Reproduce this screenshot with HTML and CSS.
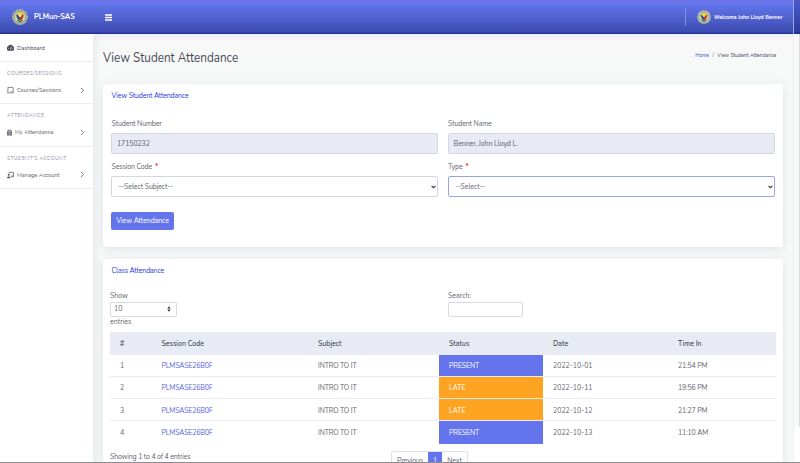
FILE: index.html
```html
<!DOCTYPE html>
<html lang="en">
<head>
<meta charset="utf-8">
<title>PLMun-SAS</title>
<link rel="stylesheet" href="styles.css">
</head>
<body>
<svg class="defs" width="0" height="0">
  <symbol id="seal" viewBox="0 0 30 30">
    <circle cx="15" cy="15" r="14.5" fill="#dfe3d8"/>
    <circle cx="15" cy="15" r="13" fill="none" stroke="#667962" stroke-width="2" stroke-dasharray="2 1"/>
    <circle cx="15" cy="15" r="10.8" fill="#ddd7a0" stroke="#45674d"/>
    <path d="M8 10l7 2v9c-4-1-7-4-7-11z" fill="#244995"/>
    <path d="M22 10l-7 2v9c4-1 7-4 7-11z" fill="#c62f32"/>
    <path d="M10 8l5-2 5 2-2 5-3 3-3-3z" fill="#edc52b"/>
    <path d="M10 19l5 3 5-3v3l-5 3-5-3z" fill="#3d6550"/>
    <circle cx="15" cy="12" r="2" fill="#fff3a4"/>
  </symbol>
  <symbol id="chev" viewBox="0 0 5 7"><path d="M1 1l2.6 2.5L1 6" fill="none" stroke="#777b91"/></symbol>
  <symbol id="down" viewBox="0 0 5 4"><path d="M.6.8l1.9 1.9L4.4.8" fill="none" stroke="#333" stroke-width="1.1"/></symbol>
</svg>
<header class="topbar">
  <div class="brand"><svg class="seal big"><use href="#seal"/></svg><span class="brand-name">PLMun-SAS</span></div>
  <svg class="burger" viewBox="0 0 7 7"><path d="M0 1h7M0 3.5h7M0 6h7" stroke="#fff" stroke-width="1.3"/></svg>
  <div class="user"><svg class="seal"><use href="#seal"/></svg><span class="welcome">Welcome John Lloyd Benner</span></div>
  <div class="topbar-end"></div>
</header>
<div class="shell">
  <nav class="sidebar">
    <a class="item dash"><svg class="ico" viewBox="0 0 8 8"><path d="M1 7.2A4 4 0 1 1 7 7.2z" fill="#4a4c59"/><path d="M4 5.8L5 2.6M1.5 4.5h.8M5.9 4.5h.7M2.4 2.4l.5.5" stroke="#fff" stroke-width=".8"/></svg><span>Dashboard</span></a>
    <section class="group">
      <h6>COURSES/SESSIONS</h6>
      <a class="item"><svg class="ico" viewBox="0 0 8 8"><path d="M1 6.5V1h6v5.5M0 7.2h8M4 6.2h2" fill="none" stroke="#696b76" stroke-width=".9"/></svg><span>Courses/Sessions</span><svg class="chev"><use href="#chev"/></svg></a>
    </section>
    <section class="group">
      <h6>ATTENDANCE</h6>
      <a class="item"><svg class="ico narrow" viewBox="0 0 6 7"><path d="M0 1h6v6H0zM1.2 0h1v1h-1zM3.8 0h1v1h-1z" fill="#696b76"/><path d="M0 2.3h6M1 4h4M1 5.6h4" stroke="#e5e5e8" stroke-width=".5"/></svg><span>My Attendance</span><svg class="chev"><use href="#chev"/></svg></a>
    </section>
    <section class="group">
      <h6>STUDENT'S ACCOUNT</h6>
      <a class="item"><svg class="ico" viewBox="0 0 8 8"><path d="M2.4 2V1h5v5H4.5M5 5h1.5" fill="none" stroke="#5b5d68" stroke-width=".9"/><circle cx="2" cy="3.7" r="1.2" fill="#5b5d68"/><path d="M0 7.7c0-3.2 4-3.2 4 0z" fill="#5b5d68"/></svg><span>Manage Account</span><svg class="chev"><use href="#chev"/></svg></a>
    </section>
  </nav>
  <main class="content">
    <div class="heading">
      <h1>View Student Attendance</h1>
      <div class="crumbs"><a>Home</a><span class="slash">/</span><span>View Student Attendance</span></div>
    </div>
    <section class="card form-card">
      <h2>View Student Attendance</h2>
      <div class="fields">
        <div><label>Student Number</label><div class="control off"><span>17150232</span></div></div>
        <div><label>Student Name</label><div class="control off"><span>Benner, John Lloyd L.</span></div></div>
        <div><label>Session Code<b>*</b></label><div class="control pick"><span>--Select Subject--</span><svg class="down"><use href="#down"/></svg></div></div>
        <div><label>Type<b>*</b></label><div class="control pick focus"><span>--Select--</span><svg class="down"><use href="#down"/></svg></div></div>
      </div>
      <button class="btn">View Attendance</button>
    </section>
    <section class="card table-card">
      <h2>Class Attendance</h2>
      <div class="tools">
        <div><div>Show</div><div class="length"><span>10</span><svg viewBox="0 0 4 6"><path d="M.3 2.5L2 .3l1.7 2.2zM.3 3.5L2 5.7l1.7-2.2z" fill="#333"/></svg></div><div class="entries">entries</div></div>
        <div><div>Search:</div><div class="search"></div></div>
      </div>
      <table>
        <colgroup><col class="c1"><col class="c2"><col class="c3"><col class="c4"><col class="c5"><col class="c6"></colgroup>
        <thead><tr><th>#</th><th>Session Code</th><th>Subject</th><th>Status</th><th>Date</th><th>Time In</th></tr></thead>
        <tbody>
          <tr><td>1</td><td class="code">PLMSASE26B0F</td><td class="subj">INTRO TO IT</td><td class="present">PRESENT</td><td>2022-10-01</td><td class="time">21:54 PM</td></tr>
          <tr><td>2</td><td class="code">PLMSASE26B0F</td><td class="subj">INTRO TO IT</td><td class="late">LATE</td><td>2022-10-11</td><td class="time">19:56 PM</td></tr>
          <tr><td>3</td><td class="code">PLMSASE26B0F</td><td class="subj">INTRO TO IT</td><td class="late">LATE</td><td>2022-10-12</td><td class="time">21:27 PM</td></tr>
          <tr><td>4</td><td class="code">PLMSASE26B0F</td><td class="subj">INTRO TO IT</td><td class="present">PRESENT</td><td>2022-10-13</td><td class="time">11:10 AM</td></tr>
        </tbody>
      </table>
      <div class="foot">
        <span class="info">Showing 1 to 4 of 4 entries</span>
        <div class="pager"><span class="prev">Previous</span><span class="cur">1</span><span class="next">Next</span></div>
      </div>
    </section>
  </main>
  <div class="scroll"><div class="thumb"></div></div>
</div>
<div class="edge"></div>
</body>
</html>
```
FILE: styles.css
```css
* { box-sizing: border-box; }
body { margin: 0; width: 800px; height: 463px; overflow: hidden; background: #f3f5f5; font: 7px/10px Nunito, "Noto Sans", sans-serif; color: #62646e; white-space: nowrap; position: relative; }
h1, h2, h6 { margin: 0; font-weight: 400; }
.defs { display: none; }
.topbar { height: 34px; display: flex; align-items: center; background: linear-gradient(#8b68c8 0, #6879f2 1px, #6274ea 5px, #3c4bb0 32px, #26349a 33px, #26349a 34px); color: #fff; }
.brand { width: 105px; padding-left: 12px; display: flex; align-items: center; gap: 6px; }
.seal { width: 14px; height: 16px; flex: none; }
.seal.big { width: 16px; }
.brand-name { font-size: 8px; font-weight: 700; transform: scaleX(.9); transform-origin: left; }
.burger { width: 7px; height: 7px; }
.user { margin-left: auto; height: 18px; width: 108px; border-left: 1px solid #8790d6; padding-left: 11px; display: flex; align-items: center; gap: 2.5px; }
.welcome { font-size: 6.5px; font-weight: 700; transform: scaleX(.8); transform-origin: left; }
.topbar-end { width: 7px; height: 34px; border-left: 1px solid #9aa5e6; background: rgba(20,30,130,.35); }
.shell { display: flex; height: 429px; }
.sidebar { width: 94px; flex: none; background: #fff; border-right: 1px solid #eceeee; }
.item { display: flex; align-items: center; padding: 0 8px 0 7px; font-size: 6.5px; height: 10px; }
.item span { transform: scaleX(.87); transform-origin: left; }
.ico { width: 7px; height: 8px; margin-right: 3px; flex: none; }
.ico.narrow { width: 5px; height: 7px; }
.chev { width: 5px; height: 7px; margin-left: auto; }
.dash { height: 28px; color: #3f414d; border-bottom: 1px solid #ececf0; }
.group { height: 42.4px; padding-top: 6px; border-bottom: 1px solid #ececf0; }
.group h6 { font-size: 5px; line-height: 10px; height: 17px; padding: 1px 0 0 7px; color: #8d90a1; letter-spacing: .4px; }
.content { width: 699px; flex: none; padding: 0 10px 0 9px; background: #f7f9f9; box-shadow: inset 3px 3px 5px #ebeeee; }
.heading { height: 50px; padding: 11px 7px 0 0; display: flex; justify-content: space-between; }
h1 { font-size: 13px; line-height: 27px; color: #484a55; transform: scaleX(.9); transform-origin: left; }
.crumbs { display: flex; height: 20px; font-size: 6px; line-height: 20px; color: #464853; transform: scaleX(.85); transform-origin: right; }
.crumbs a { color: #3d4dd8; }
.slash { margin: 0 4px; }
.card { width: 680px; background: #fff; border-radius: 2px; box-shadow: 0 2px 10px rgba(60,75,75,.13); }
h2 { font-size: 7px; line-height: 10px; color: #2838dc; letter-spacing: -.17px; padding-left: .5px; }
.form-card { height: 163px; padding: 7px 8px; }
.fields { display: grid; grid-template-columns: 327px 327px; column-gap: 9.5px; margin-top: 18px; }
.fields > div { height: 43px; }
label { display: block; height: 14px; line-height: 10px; letter-spacing: -.14px; padding-left: .5px; }
label b { color: #f03a35; margin-left: 3px; }
.control { height: 21px; border: 1px solid #d3d7e5; border-radius: 2px; padding: 0 5px; display: flex; align-items: center; letter-spacing: -.1px; }
.off { background: #e8ebf4; color: #5d606c; }
.pick { padding: 0 1px 0 6.5px; }
.focus { border-color: #98a2e8; }
.down { width: 5px; height: 4px; margin-left: auto; }
.btn { display: block; width: 63px; height: 18px; margin-top: 7px; padding: 0; border: 0; border-radius: 2px; background: #6474ed; color: #fff; font: 7px/18px Nunito, "Noto Sans", sans-serif; letter-spacing: -.1px; }
.table-card { height: 205px; margin-top: 11.5px; padding: 7px 7px 0; border-radius: 2px 2px 0 0; }
.table-card h2 { padding-left: 1.5px; }
.tools { display: grid; grid-template-columns: 338px 1fr; height: 55px; padding-top: 15px; }
.length { width: 67px; height: 15px; border: 1px solid #d7dae5; border-radius: 2px; display: flex; align-items: center; justify-content: space-between; padding: 0 5px 0 3px; margin-top: 1px; }
.length svg { width: 4px; height: 6px; }
.search { width: 75px; height: 15px; border: 1px solid #d7dae5; border-radius: 2px; margin-top: 1px; }
table { width: 666px; margin-top: 1px; border-collapse: separate; border-spacing: 0; table-layout: fixed; }
.c1 { width: 41.5px; } .c2 { width: 156.5px; } .c3 { width: 131px; } .c4 { width: 104px; } .c5 { width: 125px; } .c6 { width: 108px; }
th { height: 23px; padding: 1px 10px 0; background: #e8ebf4; color: #3c3f4b; text-align: left; font-weight: 500; }
td { height: 22.3px; padding: 2px 10px 0; border-bottom: 1px solid #ebedf1; }
tr:last-child td { border-bottom-color: transparent; }
.code { color: #5967dd; letter-spacing: -.18px; }
.subj { letter-spacing: -.15px; }
.time { letter-spacing: -.15px; }
.present { background: #6474ed; color: #fff; letter-spacing: -.1px; }
.late { background: #ffa323; color: #fff; }
.foot { display: flex; height: 19px; padding-top: 7px; }
.info { width: 281px; line-height: 12px; letter-spacing: -.17px; }
.pager { display: flex; height: 18px; line-height: 17px; border: 1px solid #dfe1e9; border-radius: 2px; letter-spacing: -.1px; }
.pager span { text-align: center; }
.prev { width: 36px; } .cur { width: 14px; background: #6474ed; color: #fff; } .next { width: 25px; }
.scroll { width: 7px; flex: none; background: #fff; border-left: 1px solid #f0f2f2; }
.thumb { height: 393px; background: #f7f9f9; border-right: 1px solid #d9dfe3; }
.edge { position: absolute; left: 0; right: 0; bottom: 0; height: 1px; background: #8a8b8f; }
```
